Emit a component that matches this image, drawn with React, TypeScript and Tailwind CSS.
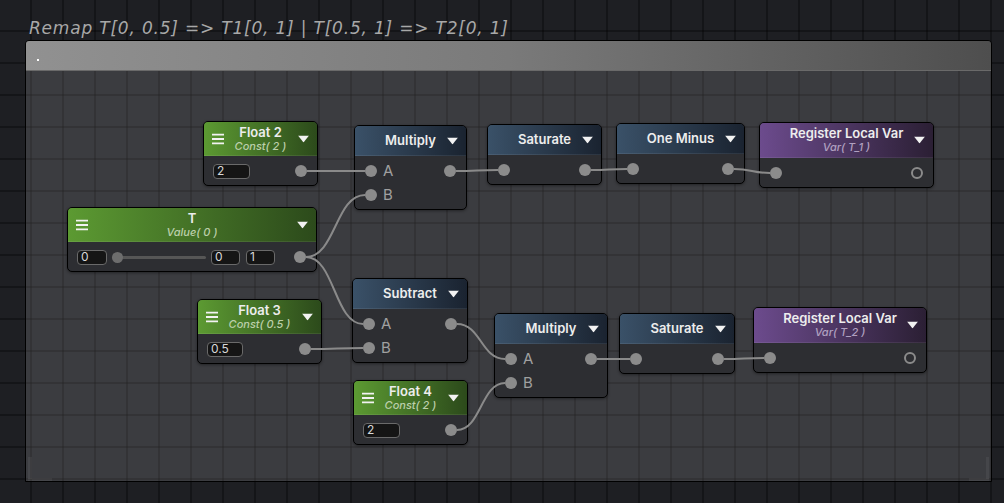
import React from 'react';

type Tint = 'green' | 'blue' | 'purple';

interface NodeDef {
  id: string;
  x: number;
  y: number;
  w: number;
  tint: Tint;
  title: string;
  sub?: string;
  menu?: boolean;
  rows: number;
}

const HEADER_H: Record<Tint, number> = { green: 34, blue: 30, purple: 35 };

const HEADER_BG: Record<Tint, string> = {
  green: 'bg-[linear-gradient(to_right,#5c9a32,#2c4a1b)]',
  blue: 'bg-[linear-gradient(to_right,#3a5168,#1a2330)]',
  purple: 'bg-[linear-gradient(to_right,#6c4b8d,#2b1f34)]',
};

const SUB_COLOR: Record<Tint, string> = {
  green: 'text-[#bccfaa]',
  blue: 'text-[#a0a8b0]',
  purple: 'text-[#b0a0c0]',
};

const nodes: NodeDef[] = [
  { id: 'f2', x: 203, y: 121, w: 115, tint: 'green', title: 'Float 2', sub: 'Const( 2 )', menu: true, rows: 1 },
  { id: 't', x: 67, y: 207, w: 250, tint: 'green', title: 'T', sub: 'Value( 0 )', menu: true, rows: 1 },
  { id: 'm1', x: 354, y: 125, w: 113, tint: 'blue', title: 'Multiply', rows: 2 },
  { id: 's1', x: 487, y: 124, w: 115, tint: 'blue', title: 'Saturate', rows: 1 },
  { id: 'om', x: 616, y: 123, w: 129, tint: 'blue', title: 'One Minus', rows: 1 },
  { id: 'r1', x: 759, y: 122, w: 175, tint: 'purple', title: 'Register Local Var', sub: 'Var( T_1 )', rows: 1 },
  { id: 'f3', x: 197, y: 299, w: 125, tint: 'green', title: 'Float 3', sub: 'Const( 0.5 )', menu: true, rows: 1 },
  { id: 'sub', x: 352, y: 278, w: 116, tint: 'blue', title: 'Subtract', rows: 2 },
  { id: 'm2', x: 494, y: 313, w: 114, tint: 'blue', title: 'Multiply', rows: 2 },
  { id: 'f4', x: 353, y: 380, w: 115, tint: 'green', title: 'Float 4', sub: 'Const( 2 )', menu: true, rows: 1 },
  { id: 's2', x: 619, y: 313, w: 116, tint: 'blue', title: 'Saturate', rows: 1 },
  { id: 'r2', x: 753, y: 307, w: 174, tint: 'purple', title: 'Register Local Var', sub: 'Var( T_2 )', rows: 1 },
];

const byId = Object.fromEntries(nodes.map((n) => [n.id, n]));

// port centre in page coords
function port(id: string, side: 'in' | 'out', row = 0) {
  const n = byId[id];
  const px = side === 'in' ? n.x + 17 : n.x + n.w - 17;
  const py = n.y + 1 + HEADER_H[n.tint] + 3 + 12 + row * 24;
  return { px, py };
}

const links: [string, number, string, number][] = [
  ['f2', 0, 'm1', 0],
  ['t', 0, 'm1', 1],
  ['t', 0, 'sub', 0],
  ['f3', 0, 'sub', 1],
  ['m1', 0, 's1', 0],
  ['s1', 0, 'om', 0],
  ['om', 0, 'r1', 0],
  ['sub', 0, 'm2', 0],
  ['f4', 0, 'm2', 1],
  ['m2', 0, 's2', 0],
  ['s2', 0, 'r2', 0],
];

function Dot() {
  return <span className="block w-3 h-3 rounded-full bg-[#8b8b8b] shrink-0" />;
}

function Ring() {
  return <span className="block w-3 h-3 rounded-full border-2 border-[#8b8b8b] shrink-0" />;
}

function Field({ value, w }: { value: string; w: number }) {
  return (
    <span
      className="flex items-center h-[15px] rounded-[4px] border border-[#6a6a6a] bg-[#151515] pl-[3px] text-[12px] leading-none text-[#d8d8d8] shrink-0"
      style={{ width: w }}
    >
      {value}
    </span>
  );
}

function Menu() {
  return (
    <svg className="absolute left-[8px] top-1/2 -translate-y-1/2" width="12" height="11" viewBox="0 0 12 11">
      <rect x="0" y="0" width="12" height="2" fill="#f2f2f2" />
      <rect x="0" y="4.5" width="12" height="2" fill="#f2f2f2" />
      <rect x="0" y="9" width="12" height="2" fill="#f2f2f2" />
    </svg>
  );
}

function Caret() {
  return (
    <svg className="absolute right-[8px] top-1/2 -translate-y-1/2" width="11" height="7" viewBox="0 0 11 7">
      <polygon points="0,0 11,0 5.5,7" fill="#f2f2f2" />
    </svg>
  );
}

function Body({ n }: { n: NodeDef }) {
  const inputs = n.tint === 'blue' && n.rows === 2;
  if (n.id === 't') {
    return (
      <div className="flex items-center h-6 pl-[9px] pr-[10px]">
        <Field value="0" w={30} />
        <div className="relative w-[94px] ml-[5px] h-3 flex items-center">
          <div className="w-full h-[3px] rounded bg-[#565656]" />
          <span className="absolute left-0 w-[11px] h-[11px] rounded-full bg-[#6d6d6d]" />
        </div>
        <span className="ml-[5px]"><Field value="0" w={29} /></span>
        <span className="ml-[6px]"><Field value="1" w={29} /></span>
        <span className="flex-1" />
        <Dot />
      </div>
    );
  }
  if (n.tint === 'green') {
    const v = n.id === 'f3' ? '0.5' : '2';
    return (
      <div className="flex items-center h-6 pl-[9px] pr-[10px]">
        <Field value={v} w={n.id === 'f3' ? 36 : 37} />
        <span className="flex-1" />
        <Dot />
      </div>
    );
  }
  if (inputs) {
    return (
      <>
        <div className="flex items-center h-6 pl-[10px] pr-[10px]">
          <Dot />
          <span className="ml-[6px] text-[15px] text-[#a0a0a0]">A</span>
          <span className="flex-1" />
          <Dot />
        </div>
        <div className="flex items-center h-6 pl-[10px] pr-[10px]">
          <Dot />
          <span className="ml-[6px] text-[15px] text-[#a0a0a0]">B</span>
        </div>
      </>
    );
  }
  return (
    <div className="flex items-center justify-between h-6 px-[10px]">
      <Dot />
      {n.tint === 'purple' ? <Ring /> : <Dot />}
    </div>
  );
}

function GraphNode({ n }: { n: NodeDef }) {
  return (
    <div
      className="absolute flex flex-col rounded-[5px] border border-black bg-[#2d2e32] overflow-hidden shadow-[0_1px_3px_rgba(0,0,0,0.4)]"
      style={{ left: n.x, top: n.y, width: n.w }}
    >
      <div
        className={`relative flex flex-col items-center justify-center border-b border-white/[0.08] ${HEADER_BG[n.tint]}`}
        style={{ height: HEADER_H[n.tint] }}
      >
        {n.menu && <Menu />}
        <span className="text-[13px] font-semibold leading-[15px] text-[#ededed]">{n.title}</span>
        {n.sub && (
          <span className={`text-[11px] font-medium italic leading-[13px] ${SUB_COLOR[n.tint]}`}>{n.sub}</span>
        )}
        <Caret />
      </div>
      <div className="pt-[3px] pb-[2px]">
        <Body n={n} />
      </div>
    </div>
  );
}

export default function App() {
  return (
    <div
      className="relative w-[1004px] h-[503px] overflow-hidden bg-[#1e1f23] [background-image:linear-gradient(to_right,rgba(0,0,0,0.32)_2px,transparent_2px),linear-gradient(to_bottom,rgba(0,0,0,0.32)_2px,transparent_2px)] [background-size:32px_32px] [background-position:30px_30px] font-['Inter','Roboto',sans-serif]"
    >
      {/* comment title */}
      <div className="absolute left-[29px] top-[17px] text-[17px] leading-[22px] tracking-[0.8px] italic text-[#a8a8a8] font-['DejaVu_Sans','Verdana',sans-serif] whitespace-nowrap">
        Remap T[0, 0.5] =&gt; T1[0, 1] | T[0.5, 1] =&gt; T2[0, 1]
      </div>

      {/* comment frame */}
      <div className="absolute left-[25px] top-[40px] w-[967px] h-[442px] flex flex-col rounded-t-[4px] border border-black overflow-hidden">
        <div className="relative h-[30px] shrink-0 bg-[linear-gradient(to_right,#919191,#7a7a7a_50%,#4e4e4e)] border-b border-[#6a6a6a]">
          <span className="absolute left-[11px] top-[18px] w-[2px] h-[2px] bg-white" />
        </div>
        <div className="relative flex-1 bg-white/[0.13]">
          <span className="absolute left-[2px] bottom-[2px] w-[4px] h-[22px] bg-white/[0.05]" />
          <span className="absolute left-[2px] bottom-0 w-[24px] h-[3px] bg-white/[0.05]" />
          <span className="absolute right-[2px] bottom-[2px] w-[3px] h-[22px] bg-white/[0.05]" />
          <span className="absolute right-[2px] bottom-0 w-[20px] h-[3px] bg-white/[0.05]" />
        </div>
      </div>

      {nodes.map((n) => (
        <GraphNode key={n.id} n={n} />
      ))}

      {/* wires */}
      <svg className="absolute inset-0 pointer-events-none" width="1004" height="503">
        {links.map(([a, ar, b, br], i) => {
          const s = port(a, 'out', ar);
          const e = port(b, 'in', br);
          const d = Math.max(20, (e.px - s.px) * 0.5);
          return (
            <path
              key={i}
              d={`M ${s.px + 6} ${s.py} C ${s.px + d} ${s.py}, ${e.px - d} ${e.py}, ${e.px - 6} ${e.py}`}
              stroke="#8a8a8a"
              strokeWidth="2"
              fill="none"
            />
          );
        })}
      </svg>
    </div>
  );
}
